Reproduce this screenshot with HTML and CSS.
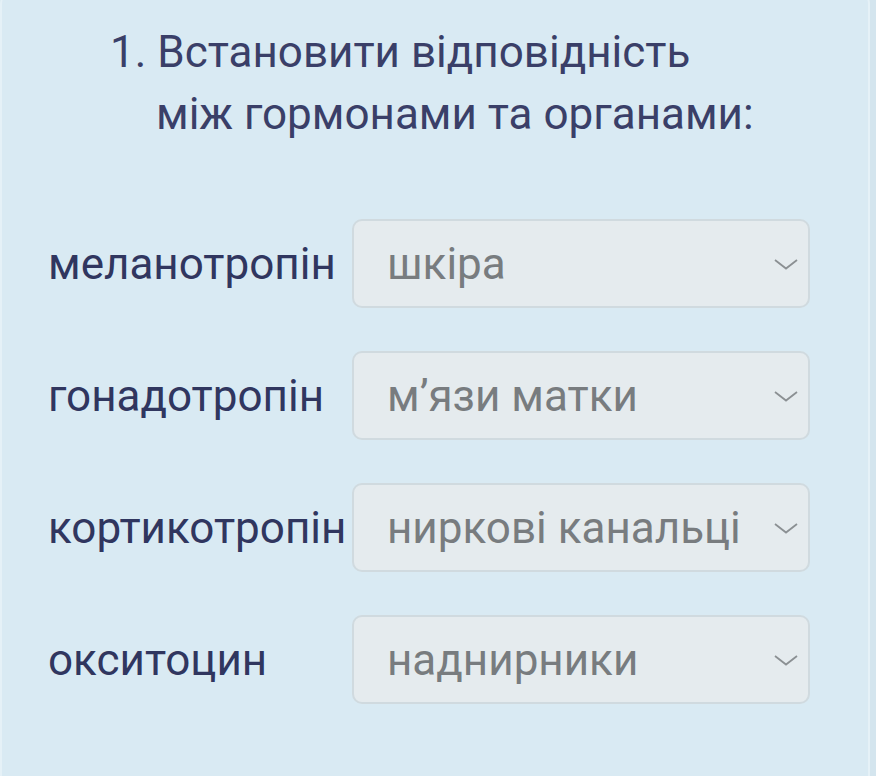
FILE: index.html
```html
<!DOCTYPE html>
<html>
<head>
  <meta charset="UTF-8">
  <title>Встановити відповідність</title>
  <link rel="stylesheet" href="styles.css">
</head>
<body>
  <div class="card">
    <h1 class="task-title">1. Встановити відповідність<br>між гормонами та органами:</h1>

    <div class="match-list">
      <div class="match-row">
        <div class="hormone">меланотропін</div>
        <div class="picker">
          <span class="picker-value">шкіра</span>
          <svg class="chevron" width="28" height="14" viewBox="0 0 28 14"><path d="M3 3 L14 11.5 L25 3" fill="none" stroke="#8b9093" stroke-width="1.8"/></svg>
        </div>
      </div>

      <div class="match-row">
        <div class="hormone">гонадотропін</div>
        <div class="picker">
          <span class="picker-value">м’язи матки</span>
          <svg class="chevron" width="28" height="14" viewBox="0 0 28 14"><path d="M3 3 L14 11.5 L25 3" fill="none" stroke="#8b9093" stroke-width="1.8"/></svg>
        </div>
      </div>

      <div class="match-row">
        <div class="hormone">кортикотропін</div>
        <div class="picker">
          <span class="picker-value">ниркові канальці</span>
          <svg class="chevron" width="28" height="14" viewBox="0 0 28 14"><path d="M3 3 L14 11.5 L25 3" fill="none" stroke="#8b9093" stroke-width="1.8"/></svg>
        </div>
      </div>

      <div class="match-row">
        <div class="hormone">окситоцин</div>
        <div class="picker">
          <span class="picker-value">наднирники</span>
          <svg class="chevron" width="28" height="14" viewBox="0 0 28 14"><path d="M3 3 L14 11.5 L25 3" fill="none" stroke="#8b9093" stroke-width="1.8"/></svg>
        </div>
      </div>
    </div>
  </div>
</body>
</html>
```

FILE: styles.css
```css
body {
  margin: 0;
  background-color: #d4e5ee;
  font-family: Roboto, 'Noto Sans', sans-serif;
  overflow: hidden;
}
.card {
  box-sizing: border-box;
  margin: -12px 6px 0 0;
  height: 788px;
  padding: 31px 0 0 46px;
  background-color: #d9eaf3;
  border: 2px solid #e5f1f7;
  border-bottom: none;
  border-radius: 16px 16px 0 0;
}
.task-title {
  margin: 0 0 74px 0;
  padding-left: 108px;
  text-indent: -46px;
  font-size: 44px;
  font-weight: 400;
  line-height: 62px;
  color: #3a3f68;
}
.match-list {
  display: flex;
  flex-direction: column;
  gap: 43px;
}
.match-row {
  display: flex;
  align-items: center;
}
.hormone {
  width: 304px;
  font-size: 44px;
  color: #30365f;
}
.picker {
  width: 458px;
  height: 89px;
  box-sizing: border-box;
  display: flex;
  align-items: center;
  justify-content: space-between;
  padding: 0 8px 0 33px;
  background-color: #e5ebee;
  border: 2px solid #d0dadf;
  border-radius: 10px;
}
.picker-value {
  font-size: 44px;
  color: #787c7f;
  white-space: nowrap;
}
.chevron {
  display: block;
}
```
